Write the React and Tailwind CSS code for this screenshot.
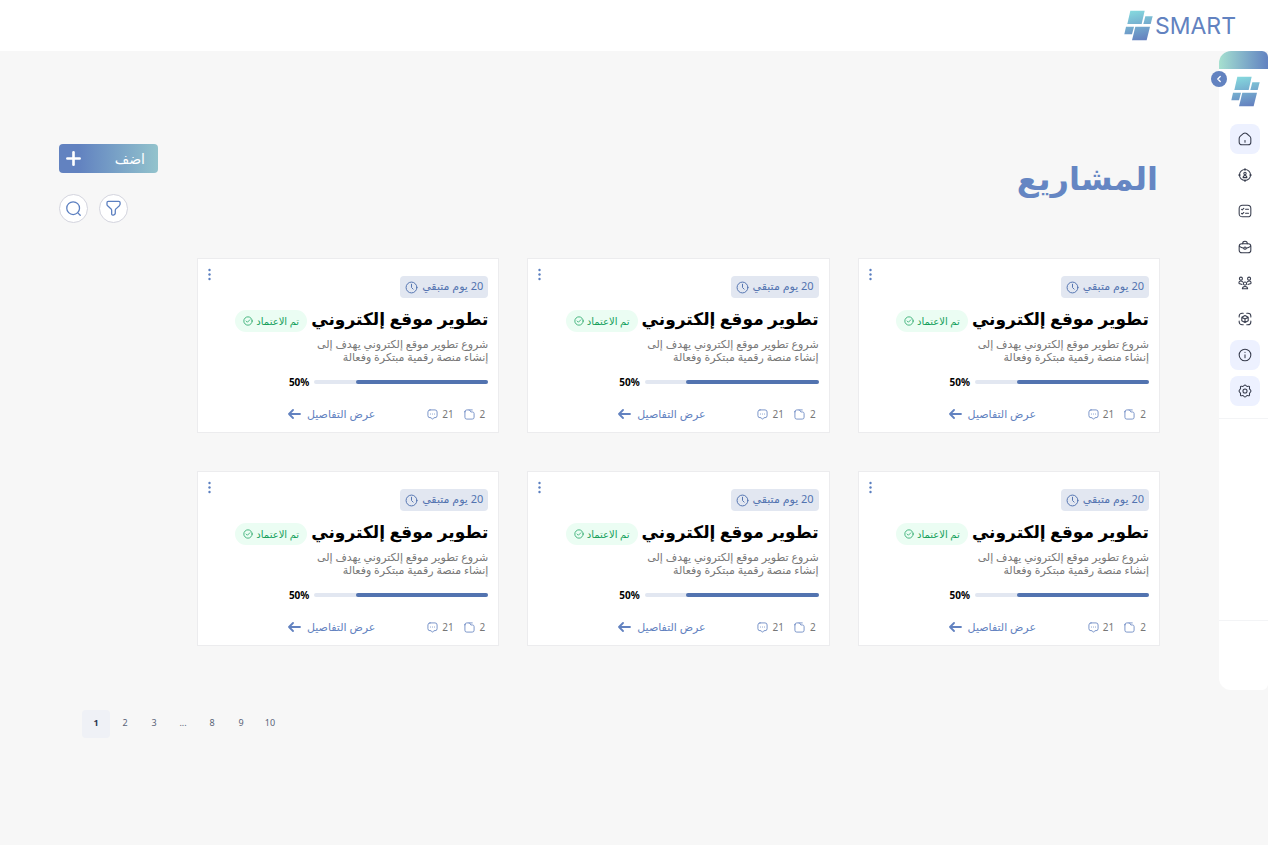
import { useState } from "react";
import { ChevronLeft, Plus } from "lucide-react";

const LogoMark = ({ id }) => (
  <svg width="29" height="31" viewBox="0 0 87 93" aria-hidden="true">
    <defs>
      <linearGradient id={id} x1="30" y1="0" x2="50" y2="92" gradientUnits="userSpaceOnUse">
        <stop offset="0" stopColor="#86dade" />
        <stop offset="1" stopColor="#6480bf" />
      </linearGradient>
    </defs>
    <g fill={`url(#${id})`}>
      <path d="M19 2h43l-9 40H10z" />
      <path d="M64 19h22l-6 23H58z" />
      <path d="M6 50h24l-6 23H1z" />
      <path d="M34 50h44l-10 41H24z" />
    </g>
  </svg>
);

const Icon = ({ size = 16, children }) => (
  <svg
    width={size}
    height={size}
    viewBox="0 0 24 24"
    fill="none"
    stroke="currentColor"
    strokeWidth="1.8"
    strokeLinecap="round"
    strokeLinejoin="round"
    className="shrink-0"
    aria-hidden="true"
  >
    {children}
  </svg>
);

const navItems = [
  {
    label: "الرئيسية",
    active: true,
    icon: (
      <>
        <path d="M9.500 2.500 4 7C2.800 8 2 9.600 2 11v6.500A4.500 4.500 0 0 0 6.500 22h11a4.500 4.500 0 0 0 4.500-4.500V11c0-1.400-.9-3-2.100-3.900l-5.200-4.500c-1.400-1-3.800-1.100-5.200-.1Z" />
        <path d="M12 17.500v-3" />
      </>
    ),
  },
  {
    label: "العملاء",
    icon: (
      <>
        <circle cx="12" cy="12" r="9.500" />
        <path d="M12 1v3M12 20v3M1 12h3M20 12h3" />
        <circle cx="12" cy="9.300" r="2" />
        <path d="M8.800 16.500c0-4.800 6.400-4.800 6.400 0z" />
      </>
    ),
  },
  {
    label: "المهام",
    icon: (
      <>
        <rect x="2" y="2" width="20" height="20" rx="5.500" />
        <path d="M13 9h5M13 16h5M6 9l1.200 1.200L10 7.500M6 16l1.200 1.200 2.800-2.700" />
      </>
    ),
  },
  {
    label: "المشاريع",
    icon: (
      <>
        <rect x="2" y="6.500" width="20" height="15.500" rx="4.500" />
        <path d="M8 6.500C8 3 8.500 2 12 2s4 1 4 4.500M2.500 11c2.500 1.800 4.800 2.600 7.500 3M21.500 11c-2.500 1.800-4.800 2.600-7.500 3" />
        <circle cx="12" cy="14" r="2" />
      </>
    ),
  },
  {
    label: "الفريق",
    icon: (
      <>
        <circle cx="5" cy="4.500" r="2.600" />
        <circle cx="19" cy="4.500" r="2.600" />
        <circle cx="12" cy="13" r="2.800" />
        <path d="M7.500 22c0-5.500 9-5.500 9 0zM2 13c-1.500-4 3-5.500 6-3M22 13c1.500-4-3-5.500-6-3M2 13l5 1.500M22 13l-5 1.500" />
      </>
    ),
  },
  {
    label: "المنتجات",
    icon: (
      <>
        <path d="M2 8.500V7a5 5 0 0 1 5-5h2M15 2h2a5 5 0 0 1 5 5v1.500M22 15.500V17a5 5 0 0 1-5 5h-2M9 22H7a5 5 0 0 1-5-5v-1.500" />
        <path d="m12 6 5.500 3v6L12 18l-5.500-3V9zM6.500 9l5.500 3 5.500-3M12 12v6" />
      </>
    ),
  },
  {
    label: "معلومات",
    active: true,
    icon: (
      <>
        <circle cx="12" cy="12" r="10" />
        <path d="M12 11.500v5M12 7.500v.1" />
      </>
    ),
  },
  {
    label: "الإعدادات",
    active: true,
    icon: (
      <>
        <circle cx="12" cy="12" r="3.500" />
        <path d="M12 1.800c1.600 0 2.200 2 3.600 2.300 1.300.4 2.800-.9 3.800.1s-.1 2.600.3 3.900c.4 1.400 2.500 2.200 2.500 3.900s-2.100 2.500-2.500 3.900c-.4 1.300.7 2.900-.3 3.900s-2.500-.3-3.800.1c-1.400.3-2 2.300-3.600 2.300s-2.200-2-3.600-2.300c-1.300-.4-2.800.9-3.800-.1s.1-2.600-.3-3.900C3.900 14.500 1.800 13.700 1.800 12s2.100-2.500 2.500-3.900c.4-1.300-.7-2.900.3-3.900s2.500.3 3.800-.1C9.800 3.800 10.400 1.800 12 1.800Z" />
      </>
    ),
  },
];

const projects = Array.from({ length: 6 }, (_, i) => ({
  id: i + 1,
  title: "تطوير موقع إلكتروني",
  remaining: "20 يوم متبقي",
  status: "تم الاعتماد",
  lines: ["شروع تطوير موقع إلكتروني يهدف إلى", "إنشاء منصة رقمية مبتكرة وفعالة"],
  progress: "50%",
  filled: 76,
  files: 2,
  comments: 21,
}));

const pages = ["1", "2", "3", "...", "8", "9", "10"];

const Header = () => (
  <header className="flex h-[51px] items-center bg-white px-8">
    <a href="#" dir="ltr" className="flex items-center gap-[2px] text-[#6282c0]">
      <LogoMark id="logo-header" />
      <span className="pt-[2px] font-['Inter'] text-[23px]">SMART</span>
    </a>
  </header>
);

const Sidebar = () => (
  <aside className="relative h-[639px] w-[49px] shrink-0 rounded-l-xl rounded-r-md bg-white">
    <div className="h-[18px] rounded-tl-xl rounded-tr-md bg-linear-to-r from-[#a6e0cf] to-[#6282c0]" />
    <button
      type="button"
      aria-label="توسيع القائمة"
      className="absolute top-5 -left-2 flex size-4 items-center justify-center rounded-full bg-[#6282c0] text-white"
    >
      <ChevronLeft size={10} strokeWidth={3} />
    </button>
    <div className="flex justify-center pt-[7px] pl-1">
      <LogoMark id="logo-side" />
    </div>
    <nav className="mt-[17px] flex flex-col items-center gap-[6px] border-b border-gray-100 pb-3 pl-[3px]">
      {navItems.map((item) => (
        <a
          key={item.label}
          href="#"
          aria-label={item.label}
          className={`flex size-[30px] items-center justify-center rounded-lg text-[#363b4c] ${item.active ? "bg-[#edf1ff]" : ""}`}
        >
          <Icon size={14}>{item.icon}</Icon>
        </a>
      ))}
    </nav>
    <div className="h-[202px] border-b border-gray-100" />
  </aside>
);

const ProjectCard = ({ project }) => (
  <article className="relative flex h-[175px] flex-col border border-[#ececee] bg-white px-[10px] pt-[17px]">
    <button type="button" aria-label="خيارات" className="absolute top-[9px] left-[9px] text-[#5b7fc0]">
      <svg width="5" height="13" viewBox="0 0 5 13" fill="currentColor">
        <circle cx="2.500" cy="2" r="1.200" />
        <circle cx="2.500" cy="6.500" r="1.200" />
        <circle cx="2.500" cy="11" r="1.200" />
      </svg>
    </button>

    <div className="flex h-[22px] w-[88px] items-center justify-between rounded-sm bg-[#e2e7f1] px-[5px] text-[11px] whitespace-nowrap text-[#5273b0]">
      <span className="pb-[2px]">{project.remaining}</span>
      <Icon size={13}>
        <circle cx="12" cy="12" r="10" />
        <path d="M12 6v6l3 3" />
      </Icon>
    </div>

    <div className="mt-2 flex h-[30px] items-center gap-1 whitespace-nowrap">
      <h2 className="pb-1 text-[17px] font-bold text-black">{project.title}</h2>
      <span className="flex h-[22px] w-[72px] items-center justify-center gap-[3px] rounded-full bg-[#ebfdf3] text-[10px] text-[#15a05c]">
        {project.status}
        <Icon size={10}>
          <circle cx="12" cy="12" r="10" />
          <path d="m7.500 12 3 3 6-6" />
        </Icon>
      </span>
    </div>

    <p className="mt-px text-[11px] leading-[13px] whitespace-nowrap text-[#777]">
      {project.lines[0]}
      <br />
      {project.lines[1]}
    </p>

    <div className="mt-[11px] flex h-4 items-center gap-[5px]">
      <div className="h-1 w-[174px] rounded-full bg-[#e2e7f1]">
        <div className="h-1 rounded-full bg-[#5273b0]" style={{ width: `${project.filled}%` }} />
      </div>
      <span dir="ltr" className="text-[10px] font-bold text-black">
        {project.progress}
      </span>
    </div>

    <div className="mt-4 flex h-4 items-center text-[10px] whitespace-nowrap text-[#777]">
      <div className="flex w-[113px] items-center gap-[10px] pr-[3px]">
        <span className="flex items-center gap-[5px]">
          {project.files}
          <span className="text-[#6282c0]">
            <Icon size={11}>
              <path d="M2 6v12a4 4 0 0 0 4 4h12a4 4 0 0 0 4-4V10c0-2-1.500-3.500-3.500-3.500H15l-2-3A3 3 0 0 0 10.500 2H6a4 4 0 0 0-4 4ZM11 2h7" />
            </Icon>
          </span>
        </span>
        <span className="flex items-center gap-1">
          {project.comments}
          <span className="text-[#6282c0]">
            <Icon size={11}>
              <path d="M6.500 2h11A4.500 4.500 0 0 1 22 6.500v8a4.500 4.500 0 0 1-4.500 4.500H15l-3 3.500L9 19H6.500A4.500 4.500 0 0 1 2 14.500v-8A4.500 4.500 0 0 1 6.500 2ZM7.500 11h.1M12 11h.1M16.500 11h.1" />
            </Icon>
          </span>
        </span>
      </div>
      <a href="#" className="flex items-center gap-[6px] text-[11px] text-[#6282c0]">
        عرض التفاصيل
        <svg
          width="13"
          height="10"
          viewBox="0 0 13 10"
          fill="none"
          stroke="currentColor"
          strokeWidth="1.800"
          strokeLinecap="round"
          strokeLinejoin="round"
          aria-hidden="true"
        >
          <path d="M12 5H1M5 1 1 5l4 4" />
        </svg>
      </a>
    </div>
  </article>
);

const Pagination = ({ page, onChange }) => (
  <nav dir="ltr" aria-label="الصفحات" className="mt-16 flex gap-px pl-[82px] text-[9px] text-[#5a6478]">
    {pages.map((p) =>
      p === "..." ? (
        <span key={p} className="flex size-7 items-center justify-center pb-[2px]">
          {p}
        </span>
      ) : (
        <button
          key={p}
          type="button"
          onClick={() => onChange(p)}
          className={`flex size-7 items-center justify-center rounded-sm pb-[2px] ${p === page ? "bg-[#eff1f6] font-bold text-[#2b3550]" : ""}`}
        >
          {p}
        </button>
      )
    )}
  </nav>
);

const App = () => {
  const [page, setPage] = useState("1");

  return (
    <div
      dir="rtl"
      lang="ar"
      className="min-h-screen bg-[#f7f7f7] font-['Noto_Sans','DejaVu_Sans',sans-serif]"
    >
      <Header />
      <div className="flex items-start">
        <Sidebar />
        <main className="min-w-0 flex-1 pt-[93px] pb-10">
          <div className="flex items-center justify-between pr-[61px] pl-[59px]">
            <h1 className="pb-3 text-[32px] font-bold text-[#6586c3]">المشاريع</h1>
            <div className="flex flex-col items-end gap-[21px]">
              <button
                type="button"
                className="flex h-[29px] w-[99px] items-center justify-between rounded-sm bg-linear-to-l from-[#93c3cc] to-[#6282c0] to-80% pr-[13px] pl-1 text-sm text-white"
              >
                اضف
                <Plus size={21} strokeWidth={3} />
              </button>
              <div className="flex gap-[11px] text-[#5b7fc0]">
                <button
                  type="button"
                  aria-label="تصفية"
                  className="flex size-[29px] items-center justify-center rounded-full border border-[#d3d4de] bg-white"
                >
                  <Icon size={17}>
                    <path d="M4.500 2h15c1 0 1.800.8 1.800 1.800v2c0 .8-.5 1.700-1 2.200l-4.800 4.500c-.6.500-1 1.400-1 2.200v4c0 .6-.4 1.300-.9 1.600l-1.300.9c-1.200.7-2.900-.1-2.900-1.600v-5c0-.7-.4-1.500-.8-2L3.700 8.100c-.5-.5-.9-1.300-.9-1.900V3.800C2.800 2.800 3.500 2 4.500 2Z" />
                  </Icon>
                </button>
                <button
                  type="button"
                  aria-label="بحث"
                  className="flex size-[29px] items-center justify-center rounded-full border border-[#d3d4de] bg-white"
                >
                  <Icon size={17}>
                    <circle cx="11.500" cy="11.500" r="9" />
                    <path d="m18.500 18.500 3 3" />
                  </Icon>
                </button>
              </div>
            </div>
          </div>

          <section className="mt-[35px] grid grid-cols-3 gap-x-7 gap-y-[38px] pr-[59px] pl-[197px]">
            {projects.map((project) => (
              <ProjectCard key={project.id} project={project} />
            ))}
          </section>

          <Pagination page={page} onChange={setPage} />
        </main>
      </div>
    </div>
  );
};

export default App;
